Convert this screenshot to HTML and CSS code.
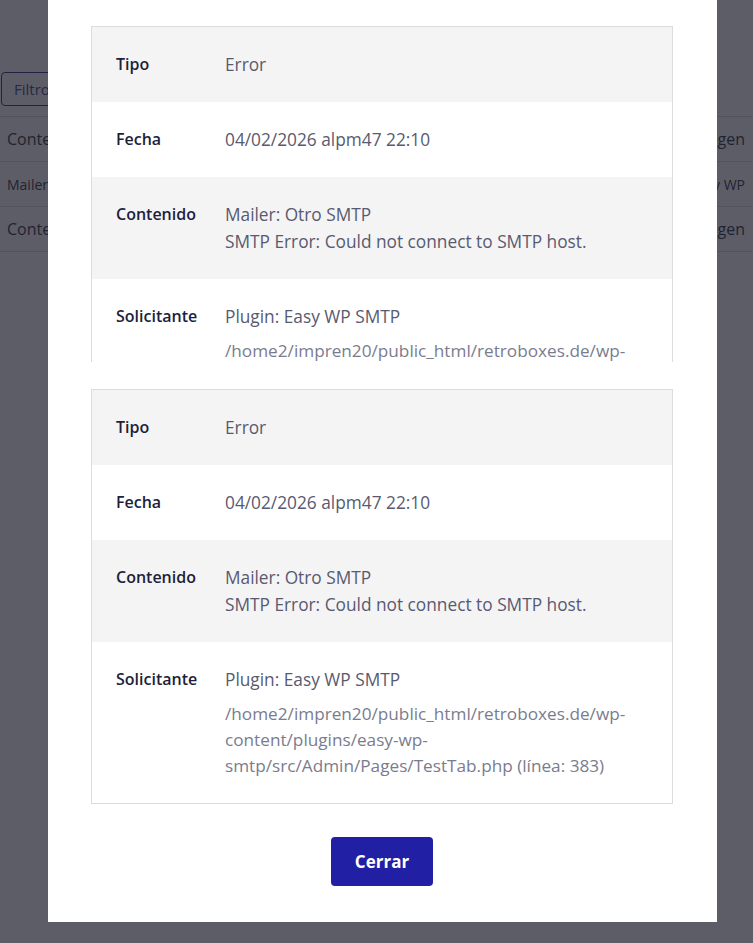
FILE: index.html
```html
<!DOCTYPE html>
<html lang="es">
<head>
<meta charset="utf-8">
<link rel="stylesheet" href="styles.css">
</head>
<body>
<div class="page">
  <div class="toolbar"><button class="filter">Filtro</button></div>
  <div class="bg-table">
    <div class="bg-row"><span>Contenido</span><span>Imagen</span></div>
    <div class="bg-row small"><span>Mailer</span><span>Easy WP</span></div>
    <div class="bg-row"><span>Contenido</span><span>Imagen</span></div>
  </div>
</div>
<div class="overlay">
  <div class="modal">
    <div class="log clipped">
      <div class="row gray"><div class="label">Tipo</div><div class="value">Error</div></div>
      <div class="row"><div class="label">Fecha</div><div class="value">04/02/2026 alpm47 22:10</div></div>
      <div class="row gray"><div class="label">Contenido</div><div class="value">Mailer: Otro SMTP<br>SMTP Error: Could not connect to SMTP host.</div></div>
      <div class="row"><div class="label">Solicitante</div><div class="value">Plugin: Easy WP SMTP<div class="path">/home2/impren20/public_html/retroboxes.de/wp-content/plugins/easy-wp-smtp/src/Admin/Pages/TestTab.php (línea: 383)</div></div></div>
    </div>
    <div class="log">
      <div class="row gray"><div class="label">Tipo</div><div class="value">Error</div></div>
      <div class="row"><div class="label">Fecha</div><div class="value">04/02/2026 alpm47 22:10</div></div>
      <div class="row gray"><div class="label">Contenido</div><div class="value">Mailer: Otro SMTP<br>SMTP Error: Could not connect to SMTP host.</div></div>
      <div class="row"><div class="label">Solicitante</div><div class="value">Plugin: Easy WP SMTP<div class="path">/home2/impren20/public_html/retroboxes.de/wp-content/plugins/easy-wp-smtp/src/Admin/Pages/TestTab.php (línea: 383)</div></div></div>
    </div>
    <div class="actions"><button class="close">Cerrar</button></div>
  </div>
</div>
</body>
</html>
```
FILE: styles.css
```css
* { box-sizing: border-box; }
html, body { margin: 0; padding: 0; }
body {
  font-family: "Open Sans", "Noto Sans", sans-serif;
  background: #ffffff;
  width: 753px;
  height: 943px;
  overflow: hidden;
}
.page { padding-top: 72px; }
.toolbar { height: 44px; }
.filter {
  margin-left: 1px;
  height: 34px;
  padding: 0 12px;
  border: 1px solid #2a2f8a;
  border-radius: 4px;
  background: #fff;
  color: #3b3f8f;
  font-family: inherit;
  font-size: 15px;
}
.bg-table { border-top: 1px solid #d9d9de; }
.bg-row {
  display: flex;
  justify-content: space-between;
  height: 45px;
  align-items: center;
  padding: 0 8px 0 7px;
  border-bottom: 1px solid #d9d9de;
  font-size: 16px;
  color: #2b2d3c;
}
.bg-row.small { font-size: 14px; }
.overlay {
  position: fixed;
  inset: 0;
  background: rgba(30, 31, 45, 0.72);
}
.modal {
  position: absolute;
  left: 48px;
  width: 669px;
  top: 0;
  height: 922px;
  background: #ffffff;
  padding: 26px 44px 0 43px;
  display: flex;
  flex-direction: column;
}
.log { border: 1px solid #dcdcde; }
.log.clipped {
  height: 336px;
  overflow: hidden;
  border-bottom: none;
  margin-bottom: 27px;
}
.row {
  display: flex;
  padding: 24px;
  background: #ffffff;
}
.row.gray { background: #f4f4f5; }
.label {
  width: 109px;
  flex: none;
  font-weight: 600;
  font-size: 16px;
  line-height: 27px;
  color: #1d1f3b;
}
.value {
  flex: 1;
  font-size: 17.3px;
  line-height: 27px;
  color: #585a70;
}
.path {
  margin-top: 8px;
  font-size: 17.2px;
  line-height: 26px;
  color: #7a7c8e;
}
.actions {
  display: flex;
  justify-content: center;
  padding-top: 33px;
}
.close {
  width: 102px;
  height: 49px;
  border: none;
  border-radius: 4px;
  background: #211fa3;
  color: #ffffff;
  font-family: inherit;
  font-weight: 700;
  font-size: 17px;
}
```
